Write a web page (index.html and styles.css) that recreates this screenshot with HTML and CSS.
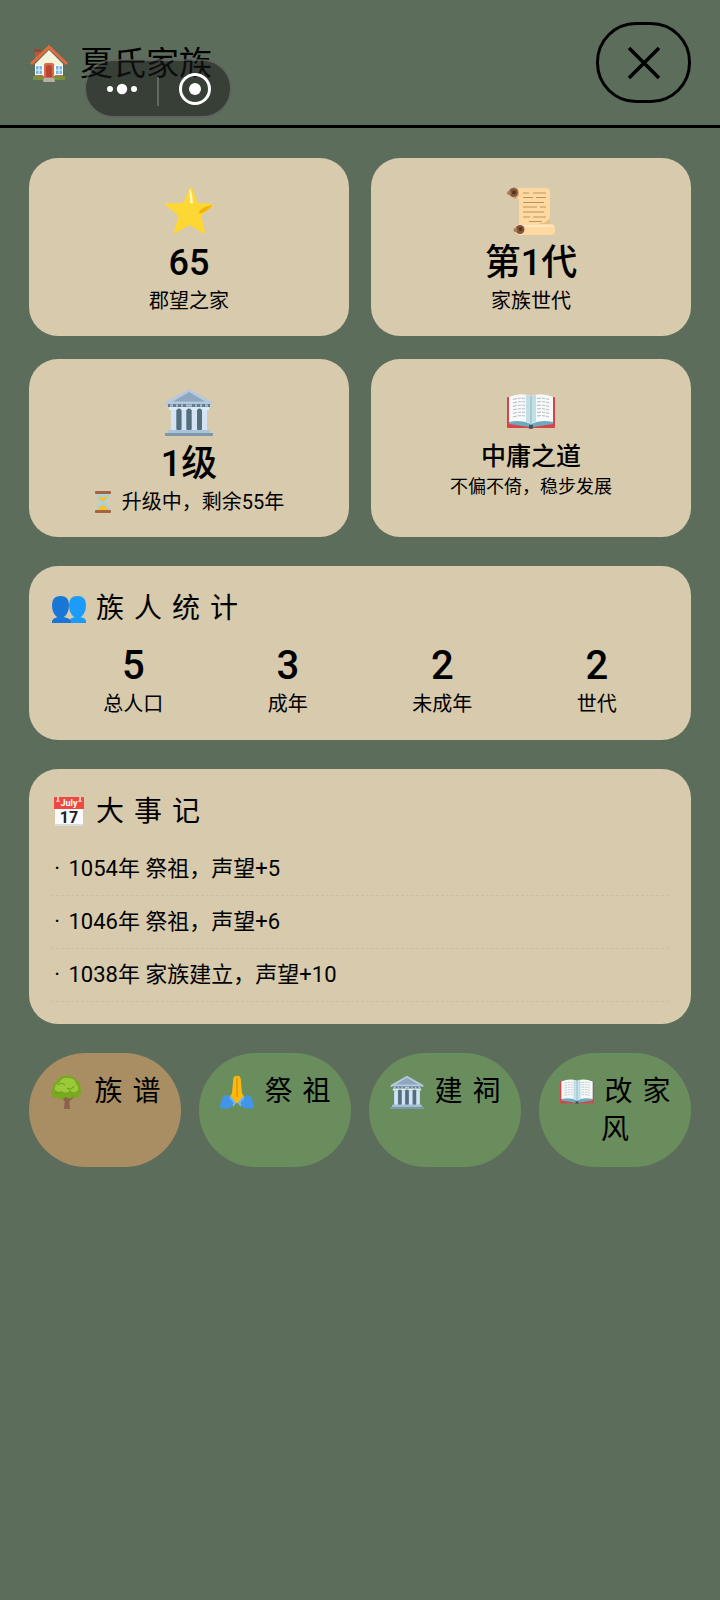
FILE: index.html
```html
<!DOCTYPE html>
<html lang="zh-CN">
<head>
<meta charset="utf-8">
<meta name="viewport" content="width=device-width, initial-scale=1">
<title>夏氏家族</title>
<link rel="stylesheet" href="styles.css">
</head>
<body>
<svg class="sprite" aria-hidden="true">
  <symbol id="museum" viewBox="0 0 48 48">
    <path d="M1 14 24 1l23 13v3H1z" fill="#b4c9dc"/>
    <path d="M8 13.500 24 4l16 9.500z" fill="#8ea6bf"/>
    <path d="M3 16h42v3H3z" fill="#607d91"/>
    <path d="M5 16.500h3v2H5zm6 0h2v2h-2zm5 0h2v2h-2zm5 0h6v2h-6zm9 0h2v2h-2zm5 0h2v2h-2zm5 0h3v2h-3z" fill="#b4c9dc"/>
    <path d="M4 19h40v3H4z" fill="#dcebf8"/>
    <path d="M6 22h36v20H6z" fill="#9fb8ce"/>
    <path d="M6 22h5v20H6zm10.500 0H21v20h-4.500zm10.500 0h5v20h-5zm10 0h5v20h-5z" fill="#d3e5f5"/>
    <rect x="11.500" y="20.500" width="5" height="22" rx="2.500" fill="#546e7e"/>
    <rect x="21.500" y="20.500" width="5" height="22" rx="2.500" fill="#546e7e"/>
    <rect x="32" y="20.500" width="5" height="22" rx="2.500" fill="#546e7e"/>
    <path d="M3 42h42v3H3z" fill="#aac3d8"/>
    <path d="M0 45h48v3.500H0z" fill="#7d97ad"/>
  </symbol>
  <symbol id="book" viewBox="0 0 48 48">
    <path d="M0 10q0-1 1-1h46q1 0 1 1v29q0 1-1 1H27q-3 2-6 0H1q-1 0-1-1z" fill="#d8434a"/>
    <path d="M2 9h44v27l-20 3h-4L2 36z" fill="#6fa9bd"/>
    <path d="M22 37h4v3q-2 1-4 0z" fill="#33586b"/>
    <path d="M2 34V9q12-5 22-1v28q-10-5-22-2z" fill="#f7fafb"/>
    <path d="M46 34V9Q34 4 24 8v28q10-5 22-2z" fill="#f7fafb"/>
    <path d="M19 7q3 0 5 1.500Q26 7 29 7v27q-4 .5-5 2-1-1.500-5-2z" fill="#c3dfe6"/>
    <path d="M24 8v28" stroke="#8bb5c3"/>
    <path d="M6 11.500q6-2 12-1M6 15q6-2 12-1M6 18.500q6-2 12-1M6 22q6-2 12-1M6 25.500q6-2 12-1M6 29q6-2 12-1M30 10.500q6-1 12 1M30 14q6-1 12 1M30 17.500q6-1 12 1M30 21q6-1 12 1M30 24.500q6-1 12 1M30 28q6-1 12 1" fill="none" stroke="#b4b8ba" stroke-dasharray="4 1 3 1"/>
  </symbol>
</svg>

<header class="topbar">
  <h1 class="topbar-title">
    <svg class="house" viewBox="0 0 38 38" aria-hidden="true">
      <path d="M5 5h5v9H5z" fill="#bf5638"/>
      <path d="M4 4h7v3H4z" fill="#8c4a38"/>
      <path d="M5 19 19 5l14 14v16H5z" fill="#f8f1da"/>
      <path d="M3 31h32v4H3z" fill="#71933a"/>
      <path d="M14 32h10l1 5H13z" fill="#b3b1ac"/>
      <path d="M14 20q0-2 2-2h6q2 0 2 2v13H14z" fill="#d66b4d"/>
      <path d="M16 23q0-3 3-3t3 3v9h-6z" fill="#b94530"/>
      <path d="M5.500 20.500h7v9h-7zm20 0h7v9h-7z" fill="#70b8e8" stroke="#fff"/>
      <path d="M9 20v9M5 25h8M29 20v9M25 25h8" stroke="#e9f5fb"/>
      <path d="M5 30h8v2H5zm20 0h8v2h-8z" fill="#a87846"/>
      <path d="M1 19 19 2l18 17" fill="none" stroke="#e4693e" stroke-width="3"/>
    </svg>
    夏氏家族
  </h1>
  <button class="close" type="button" aria-label="关闭">
    <svg viewBox="0 0 32 32" aria-hidden="true"><path d="m1 1 30 30M31 1 1 31" stroke="#000" stroke-width="3.500"/></svg>
  </button>
  <div class="capsule">
    <button type="button" aria-label="更多">
      <svg class="dots" viewBox="0 0 32 12" aria-hidden="true"><g fill="#fff"><circle cx="4" cy="6" r="3"/><circle cx="16" cy="6" r="5.200"/><circle cx="28" cy="6" r="3"/></g></svg>
    </button>
    <button type="button" aria-label="退出">
      <svg class="ring" viewBox="0 0 32 32" aria-hidden="true"><circle cx="16" cy="16" r="14.500" fill="none" stroke="#fff" stroke-width="3"/><circle cx="16" cy="16" r="6" fill="#fff"/></svg>
    </button>
  </div>
</header>

<main class="content">
  <section class="tiles">
    <article class="card tile">
      <svg class="tile-icon" viewBox="0 0 48 48" aria-hidden="true">
        <path d="M25 1q1.500-1 2 0l5.500 15L48 17q1 .5 0 1.500L36 28.500 40 45q0 2-1.500 1.500L24.500 38 10 46.500Q8.500 47 9 45l4.500-16.500L0 18q-.5-1 1-1.500L18 16z" fill="#fdd835"/>
        <path d="M24.500 2q2 0 3.500 14-2 1.500-3-1z" fill="#fff8b8"/>
        <path d="M46 18q2 0 0 2-5 5-11 7-2-1-.5-3 3-4 11.500-6z" fill="#f4b400"/>
      </svg>
      <strong class="value">65</strong>
      <span class="label">郡望之家</span>
    </article>
    <article class="card tile">
      <svg class="tile-icon" viewBox="0 0 48 48" aria-hidden="true">
        <path d="M5 1h33q5 0 5 5v28q0 4-4 6H12V12L5 9z" fill="#ffd9a0"/>
        <path d="M12 37q14 2 24-1 6-2 7-6v9H12z" fill="#e8bd7f"/>
        <path d="M6 0q6 0 6 6 0 5-4 6l-3-2z" fill="#d9a566"/>
        <circle cx="6.500" cy="5.500" r="4.500" fill="#85563b"/><circle cx="2" cy="6" r="2" fill="#aa7b58"/><circle cx="7" cy="5.500" r="2" fill="#4e342e"/>
        <rect x="9" y="37" width="39" height="11" rx="4" fill="#ffd9a0"/>
        <path d="M15 38h29q3 0 3 2H15z" fill="#ffe8c2"/>
        <circle cx="13" cy="42.500" r="4.500" fill="#85563b"/><circle cx="8.500" cy="43" r="2" fill="#aa7b58"/><circle cx="13.500" cy="42" r="2" fill="#4e342e"/>
        <path d="M16 6h6m4 0h13M16 10.500h10m3 0h10M16 15.500h21M16 20h14m3 0h6M16 25h21M16 30h7m3 0h13M22 34.500h13" stroke="#bd9268" stroke-width="1.200"/>
      </svg>
      <strong class="value">第1代</strong>
      <span class="label">家族世代</span>
    </article>
    <article class="card tile">
      <svg class="tile-icon" aria-hidden="true"><use href="#museum"/></svg>
      <strong class="value">1级</strong>
      <span class="label">
        <svg class="hourglass" viewBox="0 0 18 22" aria-hidden="true">
          <path d="M3 2h12v3q0 3-4 6 4 3 4 6v3H3v-3q0-3 4-6-4-3-4-6z" fill="#a9d3dc"/>
          <path d="M4 6q4 1 10-1-1 3-5 5.500Q5 8 4 6zm0 13q1-4 5-5 4 1 5 5z" fill="#fbc02d"/>
          <rect x="1" y="0" width="16" height="3" rx="1" fill="#a5633f"/><rect x="1" y="19" width="16" height="3" rx="1" fill="#a5633f"/>
        </svg>
        升级中，剩余55年
      </span>
    </article>
    <article class="card tile">
      <svg class="tile-icon" aria-hidden="true"><use href="#book"/></svg>
      <strong class="value value-small">中庸之道</strong>
      <span class="label label-small">不偏不倚，稳步发展</span>
    </article>
  </section>

  <section class="card panel">
    <h2 class="panel-title"><svg class="icon" viewBox="0 0 34 34" aria-hidden="true">
      <path d="M17 31v-2q1-3 6-4h5q6 1 6 4v2zM17 13Q17 4 25.500 4T34 13q0 8-5 12h-7q-5-4-5-12z" fill="#1b9cf8"/>
      <path d="M0 31v-2q1-3 6-4h5q7 1 8 4v2zM0 13Q0 4 8.500 4T17 13q0 8-5 12H5Q0 21 0 13z" fill="#1976d6"/>
    </svg>族人统计</h2>
    <dl class="stats">
      <div class="stat"><dt>总人口</dt><dd>5</dd></div>
      <div class="stat"><dt>成年</dt><dd>3</dd></div>
      <div class="stat"><dt>未成年</dt><dd>2</dd></div>
      <div class="stat"><dt>世代</dt><dd>2</dd></div>
    </dl>
  </section>

  <section class="card panel">
    <h2 class="panel-title"><svg class="icon" viewBox="0 0 34 34" aria-hidden="true">
      <path d="M3 11h28v20H3z" fill="#fafafa"/><path d="M3 29h28v2H3z" fill="#dcdcdc"/>
      <path d="M2 3q0-1 1-1h28q1 0 1 1v11H2z" fill="#f0483e"/>
      <path d="M5 2h2v3l1 2H4l1-2zm22 0h2v3l1 2h-4l1-2z" fill="#f8c2bc"/>
      <text x="17" y="11" class="cal-month">July</text>
      <text x="17" y="28" class="cal-day">17</text>
    </svg>大事记</h2>
    <ul class="log">
      <li><span class="dot">·</span> 1054年 祭祖，声望+5</li>
      <li><span class="dot">·</span> 1046年 祭祖，声望+6</li>
      <li><span class="dot">·</span> 1038年 家族建立，声望+10</li>
    </ul>
  </section>

  <nav class="actions">
    <button class="action action-main" type="button"><span class="action-label"><svg class="icon" viewBox="0 0 34 34" aria-hidden="true">
      <path d="M14 18h6l-1 5 1 11h-6l1-11z" fill="#8b6150"/><path d="m11 20 5 6m8-6-6 6" stroke="#8b6150" stroke-width="2.500"/>
      <path d="M8 23q-6 1-7-5 0-3 2-4-1-5 3-7 2-5 8-6 8-2 12 4 6 3 4 8 3 3 0 7-3 4-7 2-4 3-7 0-4 4-8 1z" fill="#78a91f"/>
      <path d="M5 15q-1-5 4-7 3-6 9-5 7 0 8 6 4 4 1 7-4 3-7-1-4 5-8 1-4 2-7-1z" fill="#9bca38"/>
      <path d="M8 10q3-3 7 0m2 3q4 3 7-2M5 17q3 3 6 0" fill="none" stroke="#719d28" stroke-width="1.200"/>
    </svg>族谱</span></button>
    <button class="action" type="button"><span class="action-label"><svg class="icon" viewBox="0 0 34 34" aria-hidden="true">
      <path d="M15 1q2-1 2 1 0-2 2-1 2 1 2 6l1 11 4 7-5 5q-4-4-8 0l-5-5 4-7 1-11q0-5 2-6z" fill="#fbb90f"/>
      <path d="M17 3v19" stroke="#dc8e0b" stroke-width="1.200"/>
      <path d="m8 20 6 8-4 5q-4 1-10 0 0-4 2-9 2-4 6-4zm18 0-6 8 4 5q4 1 10 0 0-4-2-9-2-4-6-4z" fill="#4295ea"/>
      <path d="m10 22 5 6-2 3m11-9-5 6 2 3" fill="none" stroke="#66b5fa" stroke-width="2"/>
    </svg>祭祖</span></button>
    <button class="action" type="button"><span class="action-label"><svg class="icon" aria-hidden="true"><use href="#museum"/></svg>建祠</span></button>
    <button class="action" type="button"><span class="action-label"><svg class="icon" aria-hidden="true"><use href="#book"/></svg>改家风</span></button>
  </nav>
</main>
</body>
</html>
```
FILE: styles.css
```css
* { box-sizing: border-box; }

body {
  margin: 0;
  min-height: 100vh;
  background: #5c6e5b;
  color: #000;
  font-family: Roboto, "Noto Sans CJK SC", sans-serif;
}

h1, h2, dl, dd, ul { margin: 0; padding: 0; }
h1, h2, strong { font-weight: 400; }
button { font: inherit; color: inherit; border: 0; cursor: pointer; }
svg { flex: none; }

.sprite { position: absolute; width: 0; height: 0; }

.topbar {
  position: relative;
  display: flex;
  align-items: center;
  justify-content: space-between;
  padding: 22px 29px;
  border-bottom: 3px solid #000;
}

.topbar-title {
  display: flex;
  align-items: center;
  gap: 12px;
  padding-top: 3px;
  font-size: 33px;
  line-height: 44px;
}

.house { width: 38px; height: 38px; margin-left: 1px; }

.close {
  display: grid;
  place-items: center;
  width: 95px;
  height: 81px;
  background: none;
  border: 3px solid #000;
  border-radius: 40px;
}

.close svg { width: 32px; height: 32px; }

/* Host app capsule floating over the title */
.capsule {
  position: absolute;
  top: 59px;
  left: 84px;
  display: flex;
  width: 148px;
  height: 59px;
  padding: 16px 0 10px;
  background: rgba(24, 24, 24, 0.54);
  border: 2px solid rgba(255, 255, 255, 0.2);
  border-radius: 29px;
}

.capsule button {
  flex: 1;
  display: grid;
  place-items: center;
  padding: 0;
  background: none;
}

.capsule button + button { border-left: 2px solid rgba(255, 255, 255, 0.22); }
.capsule svg { margin-top: -6px; }
.dots { width: 32px; height: 12px; }
.ring { width: 32px; height: 32px; }

.content {
  display: flex;
  flex-direction: column;
  gap: 29px;
  padding: 30px 29px;
}

.card {
  background: #d7caad;
  border-radius: 29px;
}

.tiles {
  display: grid;
  grid-template-columns: 1fr 1fr;
  gap: 23px 22px;
}

.tile {
  display: flex;
  flex-direction: column;
  align-items: center;
  gap: 2px;
  padding: 29px 22px 21px;
}

.tile-icon { width: 48px; height: 48px; margin-bottom: 4px; }

.value { font-size: 36px; line-height: 44px; font-weight: 500; }
.value-small { font-size: 25px; line-height: 30px; }

.label {
  display: flex;
  align-items: center;
  gap: 10px;
  font-size: 20px;
  line-height: 28px;
}

.label-small { font-size: 18px; line-height: 26px; }
.hourglass { width: 18px; height: 22px; }

.panel { padding: 24px 22px 22px; }

.panel-title {
  margin-bottom: 14px;
  font-size: 28px;
  line-height: 38px;
  letter-spacing: 10px;
}

.icon {
  width: 34px;
  height: 34px;
  margin: 0 10px 0 1px;
  vertical-align: -8px;
}

.cal-month, .cal-day { text-anchor: middle; letter-spacing: 0; font-weight: 700; }
.cal-month { font-size: 9px; fill: #fff; }
.cal-day { font-size: 16px; fill: #222; }

.stats { display: flex; justify-content: space-around; }

.stat {
  display: flex;
  flex-direction: column-reverse;
  align-items: center;
}

.stat dt { font-size: 20px; line-height: 28px; }
.stat dd { font-size: 40px; line-height: 48px; font-weight: 500; }

.log { list-style: none; }

.log li {
  padding: 10px 0;
  border-bottom: 1px dashed #cdc09f;
  font-size: 22px;
  line-height: 32px;
}

.log li:first-child { padding-top: 8px; }

.dot { display: inline-block; width: 12px; text-align: center; }

.actions {
  display: grid;
  grid-template-columns: repeat(4, 1fr);
  gap: 18px;
}

.action {
  display: flex;
  align-items: flex-start;
  justify-content: center;
  padding: 20px 8px 18px 18px;
  background: #6a8d5d;
  border-radius: 57px;
  font-size: 28px;
  line-height: 38px;
  letter-spacing: 10px;
}

.action-main { background: #aa8e63; }
```
